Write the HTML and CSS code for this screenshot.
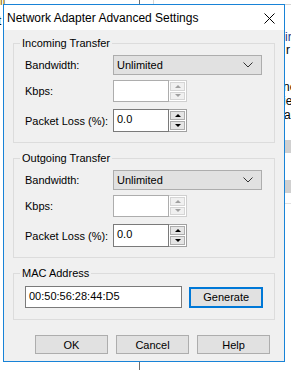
FILE: index.html
```html
<!DOCTYPE html>
<html lang="en">
<head>
    <meta charset="UTF-8">
    <meta name="viewport" content="width=device-width, initial-scale=1.0">
    <title>Network Adapter Advanced Settings</title>
    <link rel="stylesheet" href="styles.css">
</head>
<body>
    <!-- windows behind the dialog -->
    <div class="desk">
        <span class="bg-vline bg-vline-top"></span>
        <span class="bg-vline bg-vline-bottom"></span>
        <span class="bg-box"></span>
        <span class="bg-text bg-t1">ll</span>
        <span class="bg-text bg-t2">t</span>
        <span class="bg-text bg-r1">ire</span>
        <span class="bg-text bg-r2">r</span>
        <span class="bg-text bg-r3">ne</span>
        <span class="bg-text bg-r4">ie</span>
        <span class="bg-text bg-r5">al</span>
        <span class="bg-gray bg-g1"></span>
        <span class="bg-gray bg-g2"></span>
        <span class="bg-hline"></span>
    </div>

    <div class="dialog">
        <div class="titlebar">
            <span class="title">Network Adapter Advanced Settings</span>
            <svg class="close" width="11" height="11" viewBox="0 0 11 11">
                <path d="M0.5 0.5 L10.5 10.5 M10.5 0.5 L0.5 10.5" stroke="#000" stroke-width="1" fill="none"/>
            </svg>
        </div>

        <div class="content">
            <fieldset class="group">
                <legend>Incoming Transfer</legend>
                <div class="rows">
                    <div class="row row-select">
                        <label>Bandwidth:</label>
                        <div class="select">
                            <span>Unlimited</span>
                            <svg width="10" height="6" viewBox="0 0 10 6"><path d="M0.5 0.5 L5 5 L9.5 0.5" stroke="#333" fill="none"/></svg>
                        </div>
                    </div>
                    <div class="row row-kbps">
                        <label>Kbps:</label>
                        <div class="spin disabled">
                            <div class="spin-input"></div>
                            <div class="spin-btns">
                                <span class="spin-btn"><i class="arrow-up"></i></span>
                                <span class="spin-btn"><i class="arrow-down"></i></span>
                            </div>
                        </div>
                    </div>
                    <div class="row row-loss">
                        <label>Packet Loss (%):</label>
                        <div class="spin">
                            <div class="spin-input">0.0</div>
                            <div class="spin-btns">
                                <span class="spin-btn"><i class="arrow-up"></i></span>
                                <span class="spin-btn"><i class="arrow-down"></i></span>
                            </div>
                        </div>
                    </div>
                </div>
            </fieldset>

            <fieldset class="group group-out">
                <legend>Outgoing Transfer</legend>
                <div class="rows">
                    <div class="row row-select">
                        <label>Bandwidth:</label>
                        <div class="select">
                            <span>Unlimited</span>
                            <svg width="10" height="6" viewBox="0 0 10 6"><path d="M0.5 0.5 L5 5 L9.5 0.5" stroke="#333" fill="none"/></svg>
                        </div>
                    </div>
                    <div class="row row-kbps">
                        <label>Kbps:</label>
                        <div class="spin disabled">
                            <div class="spin-input"></div>
                            <div class="spin-btns">
                                <span class="spin-btn"><i class="arrow-up"></i></span>
                                <span class="spin-btn"><i class="arrow-down"></i></span>
                            </div>
                        </div>
                    </div>
                    <div class="row row-loss">
                        <label>Packet Loss (%):</label>
                        <div class="spin">
                            <div class="spin-input">0.0</div>
                            <div class="spin-btns">
                                <span class="spin-btn"><i class="arrow-up"></i></span>
                                <span class="spin-btn"><i class="arrow-down"></i></span>
                            </div>
                        </div>
                    </div>
                </div>
            </fieldset>

            <fieldset class="group group-mac">
                <legend>MAC Address</legend>
                <div class="mac-row">
                    <div class="mac-input">00:50:56:28:44:D5</div>
                    <button class="btn btn-default">Generate</button>
                </div>
            </fieldset>

            <div class="actions">
                <button class="btn">OK</button>
                <button class="btn">Cancel</button>
                <button class="btn">Help</button>
            </div>
        </div>
    </div>
</body>
</html>
```

FILE: styles.css
```css
body {
    margin: 0;
    background-color: #fff;
    font-family: "Liberation Sans", Arial, sans-serif;
    font-size: 11px;
    color: #000;
    overflow: hidden;
    height: 370px;
    position: relative;
}

/* background windows */
.desk {
    position: absolute;
    left: 0;
    top: 0;
    width: 291px;
    height: 370px;
    overflow: hidden;
}

.bg-vline {
    position: absolute;
    left: 139px;
    width: 1px;
    background-color: #6d6d6d;
}

.bg-vline-top {
    top: 0;
    height: 4px;
}

.bg-vline-bottom {
    top: 362px;
    height: 8px;
}

.bg-box {
    position: absolute;
    left: 153px;
    top: -2px;
    width: 140px;
    height: 5px;
    border: 1px solid #d5d5d5;
}

.bg-text {
    position: absolute;
    font-size: 12px;
    line-height: 12px;
    color: #000;
}

.bg-t1 { left: 0; top: -5px; color: #8a6d00; }
.bg-t2 { left: -2px; top: 15px; }
.bg-r1 { left: 285px; top: 31px; color: #1a3a8a; }
.bg-r2 { left: 286px; top: 44px; }
.bg-r3 { left: 283px; top: 81px; }
.bg-r4 { left: 283px; top: 95px; }
.bg-r5 { left: 284px; top: 109px; }

.bg-gray {
    position: absolute;
    left: 285px;
    width: 6px;
    height: 13px;
    background-color: #d0d0d0;
}

.bg-g1 { top: 140px; }
.bg-g2 { top: 180px; }

.bg-hline {
    position: absolute;
    left: 285px;
    top: 203px;
    width: 6px;
    height: 1px;
    background-color: #e0e0e0;
}

/* dialog */
.dialog {
    position: relative;
    margin: 4px 0 0 3px;
    width: 282px;
    height: 358px;
    box-sizing: border-box;
    border: 1px solid #1883d7;
    background-color: #f0f0f0;
}

.titlebar {
    height: 25px;
    background-color: #fff;
    display: flex;
    align-items: center;
    justify-content: space-between;
    padding: 0 9px 0 3px;
}

.title {
    font-size: 12px;
    padding-top: 1px;
}

.close {
    display: block;
    margin-top: 1px;
}

.content {
    padding: 7px 9px 0 9px;
}

.group {
    margin: 0;
    padding: 0;
    border: 1px solid #dcdcdc;
    min-width: 0;
}

.group legend {
    margin-left: 6px;
    padding: 0 2px;
    line-height: 13px;
}

.group-out {
    margin-top: 9px;
}

.group-mac {
    margin-top: 9px;
}

.rows {
    padding: 5px 11px 10px 11px;
}

.row {
    display: flex;
    align-items: center;
}

.row label {
    width: 88px;
    flex: none;
}

.row-kbps {
    margin-top: 5px;
}

.row-loss {
    margin-top: 7px;
}

.select {
    width: 149px;
    height: 20px;
    box-sizing: border-box;
    border: 1px solid #adadad;
    background-color: #e1e1e1;
    display: flex;
    align-items: center;
    justify-content: space-between;
    padding: 0 8px 0 3px;
}

.select svg {
    display: block;
}

.spin {
    display: flex;
    height: 22px;
}

.row-loss .spin {
    height: 23px;
}

.spin-input {
    width: 56px;
    box-sizing: border-box;
    border: 1px solid #7a7a7a;
    background-color: #fff;
    padding: 3px 3px 0 3px;
}

.spin-btns {
    width: 18px;
    box-sizing: border-box;
    border: 1px solid #a0a0a0;
    border-left: none;
    background-color: #fff;
    display: flex;
    flex-direction: column;
    gap: 1px;
    padding: 1px 1px 1px 1px;
}

.spin.disabled .spin-input {
    border-color: #adadad;
}

.spin.disabled .spin-btns {
    border-color: #cfcfcf;
}

.spin-btn {
    flex: 1;
    border: 1px solid #adadad;
    background-color: #e5e5e5;
    display: flex;
    align-items: center;
    justify-content: center;
}

.spin.disabled .spin-btn {
    border-color: #d5d5d5;
    background-color: #f0f0f0;
}

.arrow-up,
.arrow-down {
    width: 0;
    height: 0;
    border-left: 3px solid transparent;
    border-right: 3px solid transparent;
}

.arrow-up {
    border-bottom: 3px solid #000;
}

.arrow-down {
    border-top: 3px solid #000;
}

.spin.disabled .arrow-up {
    border-bottom-color: #a0a0a0;
}

.spin.disabled .arrow-down {
    border-top-color: #a0a0a0;
}

.mac-row {
    display: flex;
    align-items: center;
    padding: 6px 11px 11px 11px;
}

.mac-input {
    width: 158px;
    height: 22px;
    box-sizing: border-box;
    border: 1px solid #7a7a7a;
    background-color: #fff;
    padding: 3px 3px 0 3px;
}

.btn {
    font-family: "Liberation Sans", Arial, sans-serif;
    font-size: 11px;
    color: #000;
    width: 73px;
    height: 19px;
    box-sizing: border-box;
    border: 1px solid #adadad;
    background-color: #e1e1e1;
    padding: 0;
    margin: 0;
}

.btn-default {
    width: 74px;
    height: 21px;
    margin-left: 7px;
    border: 2px solid #0078d7;
}

.actions {
    display: flex;
    justify-content: flex-end;
    gap: 8px;
    margin-top: 15px;
    padding-right: 5px;
}
```
